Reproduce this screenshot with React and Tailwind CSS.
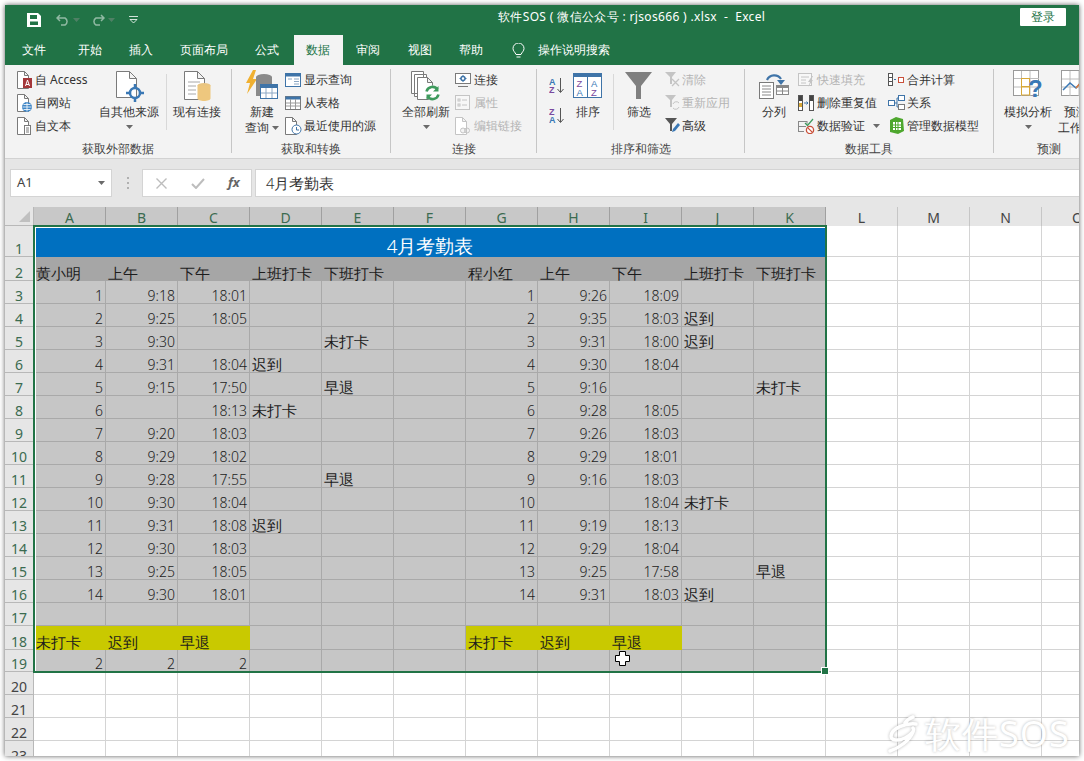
import React from "react";

const S = ({ w, h, children, className = "" }) => (
  <svg width={w} height={h} viewBox={`0 0 ${w} ${h}`} fill="none" className={`shrink-0 ${className}`}>{children}</svg>
);
const G = "#7a7a7a", B = "#3f74a8", LG = "#c4c4c4";
const Doc = ({ x = 0.5, y = 0.5, c = G }) => <path d={`M${x} ${y}h7l4 4v13h-11z M${x + 7} ${y}v4h4`} stroke={c} fill="#fff" />;

const Access = () => <S w={16} h={20}><Doc y={1.5} /><rect x="6" y="8" width="9" height="10" fill="#a4373a" /><path d="M8.5 16l2-6 2 6M9 14.5h3" stroke="#fff" strokeWidth="1" /></S>;
const Web = () => <S w={16} h={20}><Doc y={1.5} /><circle cx="10" cy="14" r="5" fill="#3f86c6" /><path d="M5.5 14h9M10 9.5v9M6.5 11.5h7M6.5 16.5h7" stroke="#fff" strokeWidth=".8" /></S>;
const Txt = () => <S w={16} h={20}><Doc y={1.5} /><rect x="7.5" y="9.5" width="6" height="9" fill="#fff" stroke={G} /><path d="M9 12h3M9 14h3M9 16h3" stroke={G} /></S>;
const BigOther = () => <S w={30} h={32}><path d="M2.5 1.5h13l7 7v19h-20z M15.5 1.5v7h7" stroke={G} fill="#fff" /><circle cx="21" cy="23" r="5" fill="none" stroke="#3a78b5" strokeWidth="2.5" /><path d="M21 14v5M21 27v5M12 23h5M25 23h5" stroke="#3a78b5" strokeWidth="2.5" /></S>;
const Existing = () => <S w={30} h={32}><path d="M2.5 1.5h13l7 7v21h-20z M15.5 1.5v7h7" stroke={G} fill="#fff" /><path d="M6 12h12M6 16h8M6 20h8M6 24h8" stroke="#a8a8a8" /><ellipse cx="22" cy="15.5" rx="6.5" ry="2.5" fill="#e9c582" /><path d="M15.5 15.5v13c0 3.3 13 3.3 13 0v-13z" fill="#eec77e" /></S>;
const NewQuery = () => <S w={34} h={32}><path d="M8 0l-7 13h4l-3 11 10-15H8l3-9z" fill="#f0b030" /><ellipse cx="19" cy="7" rx="8" ry="3" fill="#8a8a8a" /><path d="M11 7v19h8V14h8V7z" fill="#8a8a8a" /><rect x="15.5" y="14.5" width="17" height="14" fill="#fff" stroke="#3f74a8" /><rect x="15.5" y="14.5" width="17" height="3.5" fill="#3f74a8" /><path d="M21 18v10M27 18v10M16 23h16" stroke="#8da8c4" /></S>;
const ShowQ = () => <S w={16} h={16}><rect x=".5" y="1.5" width="15" height="13" fill="#fff" stroke={B} /><rect x=".5" y="1.5" width="15" height="3" fill={B} /><path d="M9 7h5M9 9.5h5M9 12h5M3 7h4" stroke="#8da8c4" /></S>;
const FromT = () => <S w={16} h={16}><rect x=".5" y="1.5" width="15" height="13" fill="#fff" stroke={G} /><rect x=".5" y="1.5" width="15" height="3" fill={B} /><path d="M5.5 4v10M10.5 4v10M1 8h14M1 11h14" stroke="#9a9a9a" /></S>;
const Recent = () => <S w={17} h={18}><Doc x={.5} y={.5} /><circle cx="11.5" cy="12.5" r="4.5" fill="#fff" stroke={B} /><path d="M11.5 10v3h2.5" stroke={B} /></S>;
const RefreshAll = () => <S w={32} h={32}><path d="M1.5 1.5h12v22h-12zM4.5 4.5h12v22h-12z" stroke={G} fill="#fff" /><path d="M7.5 7.5h10l5 5v17h-15z M17.5 7.5v5h5" stroke={G} fill="#fff" /><circle cx="22.5" cy="23" r="7.5" fill="#fff" /><path d="M16.5 21.5a6.2 6.2 0 0 1 11-2M28.5 24.5a6.2 6.2 0 0 1-11 2" stroke="#3e9a5d" strokeWidth="2.6" /><path d="M28.5 16v5.5h-5.5M16.5 30v-5.5h5.5" fill="#3e9a5d" /></S>;
const Conn = () => <S w={17} h={16}><rect x=".5" y="1.5" width="15" height="10" fill="#fff" stroke={G} /><path d="M3 14.5h10" stroke={G} /><circle cx="8" cy="6.5" r="2" fill="none" stroke={B} strokeWidth="1.5" /><path d="M8 3v1.5M8 8.5V10M4.5 6.5H6M10 6.5h1.5" stroke={B} /></S>;
const Prop = () => <S w={16} h={16}><rect x=".5" y=".5" width="14" height="14" stroke={LG} fill="#f7f7f7" /><rect x="3" y="4" width="2" height="2" stroke={LG} /><rect x="3" y="9" width="2" height="2" stroke={LG} /><path d="M7 5h5M7 10h5" stroke={LG} /></S>;
const Edit = () => <S w={16} h={18}><Doc c={LG} /><circle cx="8" cy="13.5" r="2.5" stroke={LG} fill="#f3f3f3" /><circle cx="12" cy="13.5" r="2.5" stroke={LG} /></S>;
const AZ = ({ rev }) => (
  <S w={16} h={18}>
    <text x="0" y="8" fontSize="9" fontWeight="700" fill={rev ? "#7a4a9e" : "#3a78b5"} fontFamily="Liberation Sans">{rev ? "Z" : "A"}</text>
    <text x="0" y="16" fontSize="9" fontWeight="700" fill={rev ? "#3a78b5" : "#7a4a9e"} fontFamily="Liberation Sans">{rev ? "A" : "Z"}</text>
    <path d="M11.5 1v14M8.5 12l3 3.5 3-3.5" stroke="#555" />
  </S>
);
const SortBig = () => (
  <S w={30} h={26}>
    <rect x=".5" y=".5" width="28" height="24" fill="#fff" stroke={B} />
    <rect x="0" y="0" width="29" height="4" fill={B} />
    <path d="M14.5 4v20" stroke={B} />
    <text x="3.5" y="14" fontSize="9.5" fill="#7a4a9e" fontFamily="Liberation Sans">Z</text>
    <text x="3.5" y="23" fontSize="9.5" fill="#3a78b5" fontFamily="Liberation Sans">A</text>
    <text x="18" y="14" fontSize="9.5" fill="#3a78b5" fontFamily="Liberation Sans">A</text>
    <text x="18" y="23" fontSize="9.5" fill="#7a4a9e" fontFamily="Liberation Sans">Z</text>
  </S>
);
const Funnel = () => <S w={28} h={28}><path d="M0 0h27L16 14v13h-5V14z" fill="#7f7f7f" /></S>;
const Clear = () => <S w={17} h={17}><path d="M1 1h11L8 6v7H6V6z" fill={LG} /><path d="M8 8l7 7M15 8l-7 7" stroke={LG} strokeWidth="1.3" /></S>;
const Reapply = () => <S w={17} h={17}><path d="M1 1h11L8 6v7H6V6z" fill={LG} /><path d="M9 10a3.5 3.5 0 0 1 6-1M15 13a3.5 3.5 0 0 1-6 1" stroke={LG} /></S>;
const Adv = () => <S w={17} h={17}><path d="M1 1h12L8 7v7H6V7z" fill="#555" /><path d="M8 15l1-3 5-6 2 2-5 6z" fill="#3a78b5" /></S>;
const Split = () => <S w={32} h={28}><path d="M9 8a8 8 0 0 1 14-1" stroke={B} strokeWidth="2.2" /><path d="M19 8h8l-4 5z" fill={B} /><rect x="1.5" y="10.5" width="14" height="16" fill="#fff" stroke={G} /><path d="M4 14h9M4 17h9M4 20h9M4 23h9" stroke="#888" /><rect x="18.5" y="13.5" width="12" height="9" fill="#fff" stroke="#888" /><rect x="18.5" y="13.5" width="12" height="2.5" fill="#888" /><path d="M24.5 16v6M19 19h11" stroke="#888" /></S>;
const Flash = () => <S w={17} h={16}><rect x=".5" y="1.5" width="13" height="12" stroke={LG} fill="#f7f7f7" /><path d="M3 5h8M3 8h5M3 11h5" stroke={LG} /><path d="M14 4l-4 6h2l-2 5 5-7h-2l2-4z" fill={LG} /></S>;
const Dedup = () => <S w={16} h={16}><rect x=".5" y=".5" width="4" height="15" fill="#fff" stroke="#555" /><rect x="11.5" y=".5" width="4" height="15" fill="#fff" stroke="#555" /><rect x="1" y="1" width="3" height="5" fill="#444" /><rect x="1" y="8" width="3" height="4" fill="#d8a838" /><rect x="12" y="1" width="3" height="5" fill="#444" /><path d="M6 8h3.5M8.5 6.5L10 8 8.5 9.5" stroke={B} /></S>;
const Validate = () => <S w={17} h={16}><path d="M0 3.5h9M0 8.5h8M0 13.5h6M.5 3v11M9 3v3" stroke="#888" /><path d="M7 5l2.5 2.5L15 1" stroke="#3e9a5d" strokeWidth="1.2" /><circle cx="12" cy="12" r="3.6" fill="#fff" stroke="#c9503a" strokeWidth="1.3" /><path d="M9.6 9.6l4.8 4.8" stroke="#c9503a" strokeWidth="1.3" /></S>;
const Consol = () => <S w={16} h={16}><rect x=".5" y="1.5" width="4" height="12" fill="#fff" stroke="#555" /><path d="M1 5.5h3M1 9.5h3" stroke="#555" /><path d="M6 7.5h2" stroke={B} /><rect x="10.5" y="5.5" width="5" height="5" fill="#fff" stroke="#c9503a" /></S>;
const Rel = () => <S w={17} h={16}><rect x=".5" y="5.5" width="6" height="5" stroke={B} fill="#fff" /><rect x="10.5" y=".5" width="6" height="5" stroke={B} fill="#fff" /><rect x="10.5" y="9.5" width="6" height="5" stroke={G} fill="#fff" /><path d="M7 8h2V3h1M9 8v4h1" stroke={B} /></S>;
const Model = () => <S w={16} h={17}><path d="M2 3l6-3 7 2 1 12-6 3-8-2z" fill="#4ea72e" /><rect x="5" y="5" width="8" height="8" fill="#fff" /><path d="M7.5 5v8M10 5v8M5 8h8M5 10.5h8" stroke="#4ea72e" /></S>;
const WhatIf = () => <S w={30} h={32}><rect x=".5" y=".5" width="25" height="25" fill="#fff" stroke="#9a9a9a" /><path d="M8.5 1v25M17 1v25M1 8.5h25M1 17h25" stroke="#bcbcbc" /><rect x="8.5" y="8.5" width="8" height="8" stroke="#d8a838" fill="#fff" /><rect x="8.5" y="17" width="8" height="8" stroke="#d8a838" fill="#fff" /><text x="15" y="27" fontSize="24" fontWeight="700" fill="#3a78b5" fontFamily="Liberation Sans">?</text></S>;
const Forecast = () => <S w={30} h={32}><rect x=".5" y=".5" width="26" height="25" fill="#fff" stroke="#9a9a9a" /><path d="M9 1v25M18 1v25M1 9h26M1 17h26" stroke="#bcbcbc" /><path d="M2 20l7-7 6 5 7-8" stroke="#3a78b5" strokeWidth="1.5" /><path d="M15 18l7-8 6 6" stroke="#e07b39" strokeWidth="1.5" /></S>;
const Caret = ({ className = "" }) => <svg width="7" height="4" viewBox="0 0 7 4" className={className}><path d="M0 0h7L3.5 4z" fill="#6a6a6a" /></svg>;

const Small = ({ icon, text, off, tail, tight }) => (
  <div className={`flex items-center h-[23px] whitespace-nowrap ${off ? "text-[#b4b4b4]" : "text-[#333]"}`}>
    <span className={`${tight ? "w-[18px]" : "w-[19px]"} shrink-0 flex`}>{icon}</span>
    <span>{text}</span>
    {tail}
  </div>
);
const Big = ({ icon, lines, caret, className }) => (
  <div className={`flex flex-col items-center shrink-0 text-[#333] ${className}`}>
    <div className="h-[36px] flex items-center justify-center">{icon}</div>
    {lines.map((l, i) => <div key={i} className="h-[16px] leading-[16px] whitespace-nowrap flex items-center gap-[3px]">{l}</div>)}
    {caret && <div className="h-[14px] flex items-center"><Caret /></div>}
  </div>
);
const Group = ({ label, className, children }) => (
  <div className={`shrink-0 flex flex-col relative ${className}`}>
    <div className="flex h-[72px]">{children}</div>
    <div className="h-[17px] leading-[17px] text-center text-[#444] whitespace-nowrap">{label}</div>
  </div>
);
const VSep = ({ className }) => <div className={`w-px h-[56px] mt-[6px] bg-[#d8d8d8] shrink-0 ${className}`} />;
const Bar = () => <div className="w-px bg-[#c6c6c6] h-[84px] mt-[1px] shrink-0" />;

const tabs = [
  ["文件", "ml-[5px]"], ["开始", "ml-[8px]"], ["插入", "ml-[3px]"], ["页面布局", "ml-[3px]"], ["公式", "ml-[3px]"],
  ["数据", "ml-[3px]", true], ["审阅", "ml-[1px]"], ["视图", "ml-[4px]"], ["帮助", "ml-[3px]"],
];

const colWidths = "grid-cols-[29px_repeat(15,72px)]";
const rowsDef = "grid-rows-[19px_31px_24px_repeat(15,23px)_24px_22px_repeat(4,23px)]";
const letters = "ABCDEFGHIJKLMNO".split("");

const L = (a, b, c, d, e, f, g, h, i, j) => [a, b, c, d, e, "", f, g, h, i, j];
const rows = [
  L("1","9:18","18:01","","", "1","9:26","18:09","",""),
  L("2","9:25","18:05","","", "2","9:35","18:03","迟到",""),
  L("3","9:30","","","未打卡", "3","9:31","18:00","迟到",""),
  L("4","9:31","18:04","迟到","", "4","9:30","18:04","",""),
  L("5","9:15","17:50","","早退", "5","9:16","","","未打卡"),
  L("6","","18:13","未打卡","", "6","9:28","18:05","",""),
  L("7","9:20","18:03","","", "7","9:26","18:03","",""),
  L("8","9:29","18:02","","", "8","9:29","18:01","",""),
  L("9","9:28","17:55","","早退", "9","9:16","18:03","",""),
  L("10","9:30","18:04","","", "10","","18:04","未打卡",""),
  L("11","9:31","18:08","迟到","", "11","9:19","18:13","",""),
  L("12","9:30","18:03","","", "12","9:29","18:04","",""),
  L("13","9:25","18:05","","", "13","9:25","17:58","","早退"),
  L("14","9:30","18:01","","", "14","9:31","18:03","迟到",""),
];

const isNum = (v) => /^[0-9:]+$/.test(v);
const Cell = ({ v = "", bg = "bg-[#c6c6c6] border-r border-b border-[#a9a9a9]" }) => (
  <div className={`flex items-end whitespace-nowrap leading-[15px] text-[#1c1c1c] font-light ${bg} ${isNum(v) ? "justify-end pr-[2px] text-[14px] font-['Roboto',sans-serif]" : "pl-[2px] text-[14.67px]"}`}>{v}</div>
);
const Blank = () => <div className="border-r border-b border-[#d4d4d4]" />;
const RowH = ({ n, sel }) => (
  <div className={`flex items-end justify-center bg-[#e6e6e6] border-r border-b border-[#b8b8b8] text-[14px] leading-[15px] font-['Roboto',sans-serif] ${sel ? "text-[#3b6b50]" : "text-[#444]"}`}>{n}</div>
);

function Sheet() {
  const cells = [];
  cells.push(
    <div key="corner" className="bg-[#e6e6e6] border-r border-b border-[#b8b8b8] flex items-end justify-end pr-[3px] pb-[3px]">
      <div className="w-0 h-0 border-l-[11px] border-l-transparent border-b-[11px] border-b-[#c0c0c0]" />
    </div>
  );
  letters.forEach((l, i) => {
    const sel = i < 11;
    cells.push(
      <div key={l} className={`flex items-end justify-center border-r text-[14px] leading-[16px] font-['Roboto',sans-serif] ${sel ? "bg-[#c8c8c8] text-[#3b6b50] border-[#a0a0a0]" : "bg-[#e6e6e6] text-[#444] border-[#c6c6c6]"}`}>{l}</div>
    );
  });
  const extra = (r) => [0, 1, 2, 3].map((i) => <Blank key={`x${r}-${i}`} />);

  cells.push(<RowH key="r1" n={1} sel />);
  cells.push(
    <div key="title" className="col-span-11 bg-[#0070c0] text-white text-[18.67px] font-light flex items-end justify-center leading-[22px]">4月考勤表</div>
  );
  cells.push(...extra(1));
  cells.push(<RowH key="r2" n={2} sel />);
  ["黄小明", "上午", "下午", "上班打卡", "下班打卡", "", "程小红", "上午", "下午", "上班打卡", "下班打卡"].forEach((v, i) =>
    cells.push(<Cell key={`h${i}`} v={v} bg="bg-[#a6a6a6]" />)
  );
  cells.push(...extra(2));
  rows.forEach((r, ri) => {
    cells.push(<RowH key={`r${ri + 3}`} n={ri + 3} sel />);
    r.forEach((v, i) => cells.push(<Cell key={`c${ri}-${i}`} v={v} />));
    cells.push(...extra(ri + 3));
  });
  cells.push(<RowH key="r17" n={17} sel />);
  for (let i = 0; i < 11; i++) cells.push(<Cell key={`e${i}`} />);
  cells.push(...extra(17));
  const Y = "bg-[#c9c900]";
  cells.push(<RowH key="r18" n={18} sel />);
  ["未打卡", "迟到", "早退", "", "", "", "未打卡", "迟到", "早退", "", ""].forEach((v, i) =>
    cells.push(<Cell key={`y${i}`} v={v} bg={v ? Y : undefined} />)
  );
  cells.push(...extra(18));
  cells.push(<RowH key="r19" n={19} sel />);
  ["2", "2", "2", "", "", "", "", "", "", "", ""].forEach((v, i) => cells.push(<Cell key={`s${i}`} v={v} />));
  cells.push(...extra(19));
  [20, 21, 22, 23].forEach((n) => {
    cells.push(<RowH key={`r${n}`} n={n} />);
    for (let i = 0; i < 11; i++) cells.push(<Blank key={`b${n}-${i}`} />);
    cells.push(...extra(n));
  });

  return (
    <div className="relative flex-1 overflow-hidden bg-white">
      <div className={`grid ${colWidths} ${rowsDef}`}>{cells}</div>
      <div className="absolute left-[28px] top-[18px] w-[794px] h-[448px] border-2 border-[#217346] pointer-events-none">
        <div className="absolute inset-0 border border-white border-b-0 border-r-0" />
        <div className="absolute -right-[4px] -bottom-[4px] w-[6px] h-[6px] bg-[#217346] border border-white box-content" />
      </div>
      <svg className="absolute left-[610px] top-[444px]" width="15" height="15" viewBox="0 0 15 15">
        <path d="M4.5.5h6v4h4v6h-4v4h-6v-4h-4v-6h4z" fill="#fff" stroke="#000" />
      </svg>
      <div className="absolute left-[882px] top-[505px] flex items-center gap-[6px] text-white text-[36px] leading-[44px] font-normal [text-shadow:0_0_3px_rgba(0,0,0,0.28)] whitespace-nowrap">
        <svg width="32" height="38" viewBox="0 0 32 38" style={{ filter: "drop-shadow(0 0 1.5px rgba(0,0,0,.28))" }}>
          <path d="M29 9C18 8 5 13 4 21c0 5 8 5 14 2 6-3 10-7 8-10M26 17C22 26 12 33 3 36M18 8c2-3 5-5 8-6" stroke="#fff" strokeWidth="3.5" fill="none" strokeLinecap="round" />
        </svg>
        <span className="tracking-[1px]">软件SOS</span>
      </div>
    </div>
  );
}

export default function App() {
  return (
    <div className="w-[1084px] h-[761px] bg-white p-[5px] pb-0 overflow-hidden font-['Noto_Sans_CJK_SC','Liberation_Sans',sans-serif] text-[12px]">
      <div className="w-[1074px] h-[751px] flex flex-col overflow-hidden shadow-[0_0_5px_rgba(0,0,0,0.65)]">
        <div className="h-[60px] bg-[#217346] shrink-0 flex flex-col text-white">
          <div className="h-[30px] flex items-center relative">
            <svg className="ml-[22px]" width="14" height="14" viewBox="0 0 14 14"><path d="M0 0h11l3 3v11H0z" fill="#fff" /><rect x="3" y="2" width="7" height="4" fill="#217346" /><rect x="3" y="8.5" width="8" height="3.5" fill="#217346" /></svg>
            <svg className="ml-[15px] opacity-50" width="14" height="12" viewBox="0 0 14 12"><path d="M1 4h8a4 4 0 0 1 0 7H5M4 1L1 4l3 3" stroke="#fff" strokeWidth="1.5" fill="none" /></svg>
            <Caret className="ml-[3px] opacity-40 invert" />
            <svg className="ml-[11px] opacity-50" width="14" height="12" viewBox="0 0 14 12"><path d="M13 4H5a4 4 0 0 0 0 7h4M10 1l3 3-3 3" stroke="#fff" strokeWidth="1.5" fill="none" /></svg>
            <Caret className="ml-[3px] opacity-40 invert" />
            <svg className="ml-[14px]" width="9" height="8" viewBox="0 0 9 8"><path d="M0 .5h9M1 3.5h7L4.5 7z" stroke="#fff" strokeWidth=".8" fill="none" /></svg>
            <span className="absolute left-[493px] top-[3px] text-[12px] leading-[18px] whitespace-pre tracking-[0.35px]">软件SOS ( 微信公众号 : rjsos666 ) .xlsx  -  Excel</span>
            <div className="absolute left-[1015px] top-[3px] w-[46px] h-[18px] bg-white text-[#217346] text-center leading-[18px] rounded-[1px]">登录</div>
          </div>
          <div className="h-[30px] flex items-stretch">
            {tabs.map(([t, m, act]) => (
              <div key={t} className={`${m} px-[12px] flex items-center ${act ? "bg-[#f3f3f3] text-[#217346] w-[49px]" : ""}`}>{t}</div>
            ))}
            <svg className="ml-[17px] self-center mt-[2px]" width="13" height="16" viewBox="0 0 13 16"><path d="M4 11.5C3 9 1 8 1 5.5a5.5 5.5 0 0 1 11 0C12 8 10 9 9 11.5zM4.5 14h4" stroke="#fff" fill="none" /></svg>
            <div className="ml-[13px] flex items-center">操作说明搜索</div>
          </div>
        </div>

        <div className="h-[94px] shrink-0 bg-[#f3f3f3] border-b border-[#d2d2d2] flex pt-[3px] overflow-hidden">
          <Group label="获取外部数据" className="w-[226px]">
            <div className="ml-[12px] w-[77px] shrink-0">
              <Small tight icon={<Access />} text="自 Access" />
              <Small tight icon={<Web />} text="自网站" />
              <Small tight icon={<Txt />} text="自文本" />
            </div>
            <Big icon={<BigOther />} lines={["自其他来源"]} caret className="w-[70px]" />
            <VSep className="ml-[2px]" />
            <Big icon={<Existing />} lines={["现有连接"]} className="w-[60px]" />
          </Group>
          <Bar />
          <Group label="获取和转换" className="w-[158px]">
            <Big icon={<NewQuery />} lines={["新建", <><span key="a">查询</span><Caret key="b" /></>]} className="ml-[7px] w-[46px]" />
            <div className="shrink-0">
              <Small icon={<ShowQ />} text="显示查询" />
              <Small icon={<FromT />} text="从表格" />
              <Small icon={<Recent />} text="最近使用的源" />
            </div>
          </Group>
          <Bar />
          <Group label="连接" className="w-[145px]">
            <Big icon={<RefreshAll />} lines={["全部刷新"]} caret className="ml-[6px] w-[58px]" />
            <div className="shrink-0">
              <Small icon={<Conn />} text="连接" />
              <Small icon={<Prop />} text="属性" off />
              <Small icon={<Edit />} text="编辑链接" off />
            </div>
          </Group>
          <Bar />
          <Group label="排序和筛选" className="w-[207px]">
            <div className="ml-[12px] w-[24px] shrink-0 flex flex-col pt-[9px] gap-[12px]"><AZ /><AZ rev /></div>
            <Big icon={<SortBig />} lines={["排序"]} className="w-[30px]" />
            <VSep className="ml-[10px]" />
            <Big icon={<Funnel />} lines={["筛选"]} className="w-[50px]" />
            <div className="shrink-0">
              <Small tight icon={<Clear />} text="清除" off />
              <Small tight icon={<Reapply />} text="重新应用" off />
              <Small tight icon={<Adv />} text="高级" />
            </div>
          </Group>
          <Bar />
          <Group label="数据工具" className="w-[248px]">
            <Big icon={<Split />} lines={["分列"]} className="ml-[4px] w-[49px]" />
            <div className="w-[90px] shrink-0">
              <Small icon={<Flash />} text="快速填充" off />
              <Small icon={<Dedup />} text="删除重复值" />
              <Small icon={<Validate />} text="数据验证" tail={<Caret className="ml-[8px]" />} />
            </div>
            <div className="shrink-0">
              <Small icon={<Consol />} text="合并计算" />
              <Small icon={<Rel />} text="关系" />
              <Small icon={<Model />} text="管理数据模型" />
            </div>
          </Group>
          <Bar />
          <Group label="预测" className="w-[110px]">
            <Big icon={<WhatIf />} lines={["模拟分析"]} caret className="ml-[10px] w-[48px]" />
            <Big icon={<Forecast />} lines={["预测", "工作表"]} className="w-[48px]" />
          </Group>
        </div>

        <div className="h-[48px] shrink-0 bg-[#e6e6e6] flex pt-[10px] items-start">
          <div className="ml-[5px] w-[102px] h-[28px] bg-white border border-[#d4d4d4] flex items-center justify-between pl-[6px] pr-[6px] text-[13px] text-[#444] font-['Liberation_Sans',sans-serif]">
            A1<Caret />
          </div>
          <div className="ml-[14px] w-[3px] h-[12px] mt-[8px] flex flex-col justify-between items-center">
            <span className="w-[2px] h-[2px] bg-[#b0b0b0]" /><span className="w-[2px] h-[2px] bg-[#b0b0b0]" /><span className="w-[2px] h-[2px] bg-[#b0b0b0]" />
          </div>
          <div className="ml-[13px] w-[110px] h-[28px] bg-white border border-[#d4d4d4] flex items-center relative">
            <svg className="ml-[13px]" width="11" height="11" viewBox="0 0 11 11"><path d="M.5.5l10 10M10.5.5l-10 10" stroke="#bdbdbd" strokeWidth="1.4" /></svg>
            <svg className="ml-[24px]" width="14" height="11" viewBox="0 0 14 11"><path d="M1 6l4 4 8-9" stroke="#bdbdbd" strokeWidth="2" fill="none" /></svg>
            <span className="ml-[23px] text-[13px] italic font-bold text-[#666] font-['Liberation_Serif',serif]">fx</span>
          </div>
          <div className="ml-[3px] flex-1 h-[28px] bg-white border border-[#d4d4d4] border-r-0 flex items-center pl-[10px] text-[14.67px] font-light text-[#333]">4月考勤表</div>
        </div>

        <Sheet />
      </div>
    </div>
  );
}
